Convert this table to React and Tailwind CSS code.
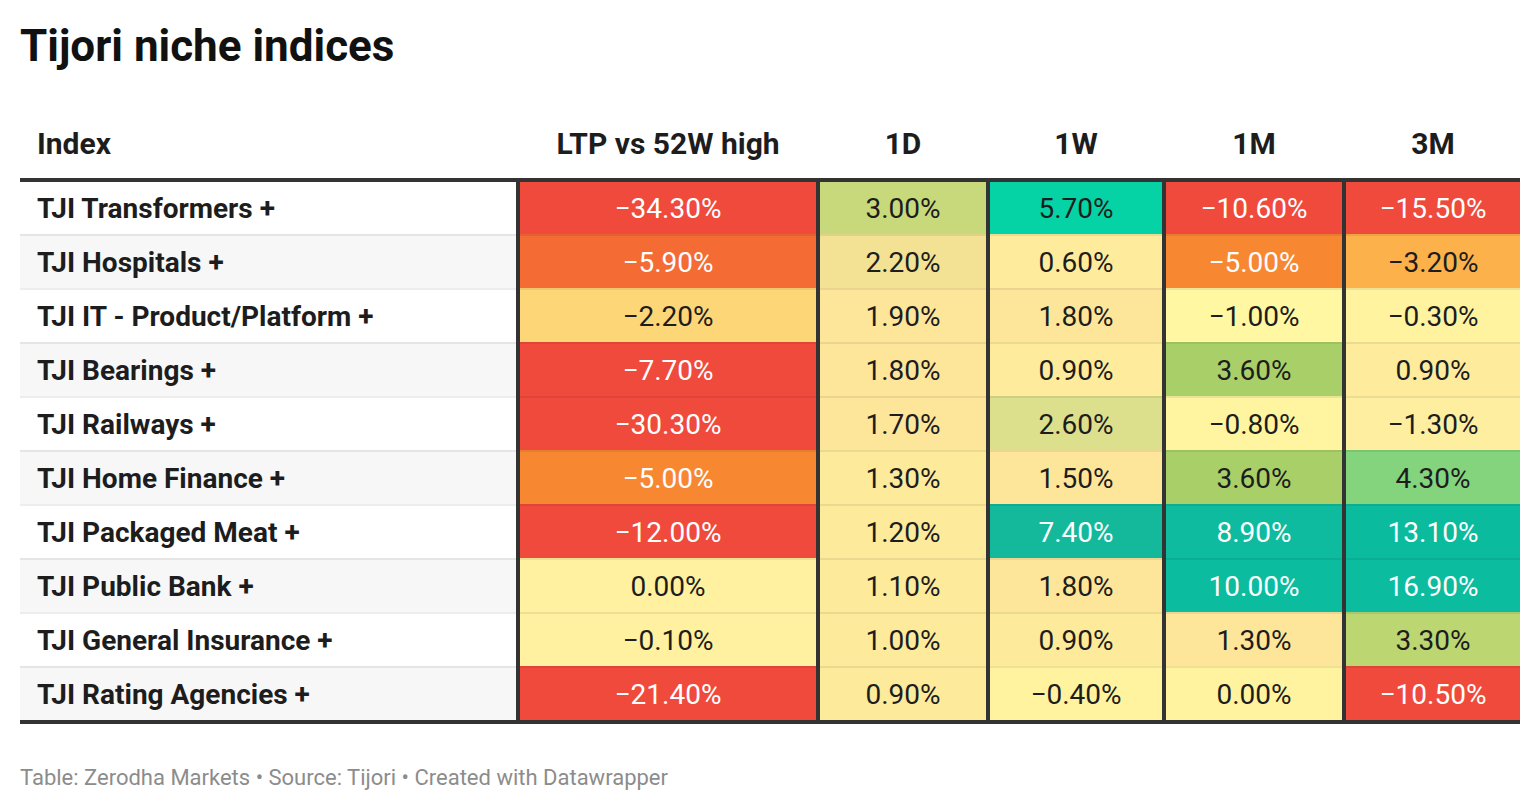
import React from "react";

const W = "#ffffff";
const D = "#1d1d1d";

const rows = [
  { name: "TJI Transformers +", cells: [["−34.30%", "#ef4a3c", W], ["3.00%", "#c8d97b", D], ["5.70%", "#05d3a6", D], ["−10.60%", "#ef4a3c", W], ["−15.50%", "#ef4a3c", W]] },
  { name: "TJI Hospitals +", cells: [["−5.90%", "#f46b34", W], ["2.20%", "#f3e294", D], ["0.60%", "#feec9c", D], ["−5.00%", "#f88732", W], ["−3.20%", "#fcb14a", D]] },
  { name: "TJI IT - Product/Platform +", cells: [["−2.20%", "#fdd677", D], ["1.90%", "#fde59a", D], ["1.80%", "#fde59a", D], ["−1.00%", "#fff7a1", D], ["−0.30%", "#fff3a0", D]] },
  { name: "TJI Bearings +", cells: [["−7.70%", "#ef4a3c", W], ["1.80%", "#fde59a", D], ["0.90%", "#feeb9c", D], ["3.60%", "#a9d068", D], ["0.90%", "#feeb9c", D]] },
  { name: "TJI Railways +", cells: [["−30.30%", "#ef4a3c", W], ["1.70%", "#fde59a", D], ["2.60%", "#dcdf8b", D], ["−0.80%", "#fff5a0", D], ["−1.30%", "#feeea0", D]] },
  { name: "TJI Home Finance +", cells: [["−5.00%", "#f88732", W], ["1.30%", "#feea9b", D], ["1.50%", "#fde69a", D], ["3.60%", "#a9d068", D], ["4.30%", "#84d47d", D]] },
  { name: "TJI Packaged Meat +", cells: [["−12.00%", "#ef4a3c", W], ["1.20%", "#feea9b", D], ["7.40%", "#13b99a", W], ["8.90%", "#0ebb9e", W], ["13.10%", "#0abb9e", W]] },
  { name: "TJI Public Bank +", cells: [["0.00%", "#fff19f", D], ["1.10%", "#feea9b", D], ["1.80%", "#fde59a", D], ["10.00%", "#0bbc9f", W], ["16.90%", "#0bbc9f", W]] },
  { name: "TJI General Insurance +", cells: [["−0.10%", "#fff19f", D], ["1.00%", "#feea9b", D], ["0.90%", "#feea9b", D], ["1.30%", "#fde69a", D], ["3.30%", "#bcd672", D]] },
  { name: "TJI Rating Agencies +", cells: [["−21.40%", "#ef4a3c", W], ["0.90%", "#feea9b", D], ["−0.40%", "#fff39f", D], ["0.00%", "#fff39f", D], ["−10.50%", "#ef4a3c", W]] },
];

const grid = "grid grid-cols-[496px_300px_170px_176px_180px_178px]";

export default function App() {
  return (
    <div
      className="w-[1540px] h-[810px] bg-white px-[20px] text-[#1d1d1d]"
      style={{ fontFamily: "Roboto, 'Liberation Sans', sans-serif" }}
    >
      <h1 className="pt-[24px] h-[68px] text-[44px] leading-[44px] font-bold text-[#111]">
        Tijori niche indices
      </h1>
      <div className={`${grid} mt-[40px] h-[70px] items-center text-[30px] leading-[30px] font-bold text-[#1d1d1d]`}>
        <div className="pl-[17px] pt-[1px]">Index</div>
        <div className="pl-[4px] pt-[1px] text-center">LTP vs 52W high</div>
        <div className="pl-[4px] pt-[1px] text-center">1D</div>
        <div className="pl-[4px] pt-[1px] text-center">1W</div>
        <div className="pl-[4px] pt-[1px] text-center">1M</div>
        <div className="pl-[4px] pt-[1px] text-center">3M</div>
      </div>
      <div className="border-t-4 border-b-4 border-[#333333]">
        {rows.map((r, i) => {
          const sep = i > 0 ? "shadow-[inset_0_2px_0_rgba(0,0,0,0.07)] pt-[3px]" : "pt-[1px]";
          return (
            <div key={r.name} className={`${grid} ${i === 0 ? "h-[52px]" : "h-[54px]"}`}>
              <div
                className={`${sep} ${i % 2 === 1 ? "bg-[#f7f7f7]" : "bg-white"} flex items-center pl-[17px] text-[28px] font-bold`}
              >
                {r.name}
              </div>
              {r.cells.map(([v, bg, fg], j) => (
                <div
                  key={j}
                  className={`${sep} border-l-4 border-[#333333] flex items-center justify-center text-[28px]`}
                  style={{ backgroundColor: bg, color: fg }}
                >
                  {v}
                </div>
              ))}
            </div>
          );
        })}
      </div>
      <div className="mt-[37px] text-[22px] text-[#8c8c8c]">
        Table: Zerodha Markets • Source: Tijori • Created with Datawrapper
      </div>
    </div>
  );
}
